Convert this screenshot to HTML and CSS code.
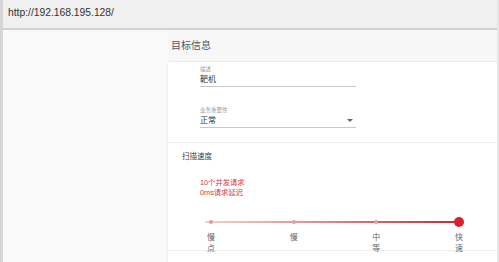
FILE: index.html
```html
<!DOCTYPE html>
<html lang="zh-CN">
<head>
  <meta charset="UTF-8">
  <meta name="viewport" content="width=device-width, initial-scale=1.0">
  <title>目标信息</title>
  <link rel="stylesheet" href="styles.css">
</head>
<body>
  <div class="frame">
    <div class="urlbar">http://192.168.195.128/</div>

    <div class="page">
      <aside class="sidebar"></aside>

      <main class="main">
        <h2 class="title">目标信息</h2>

        <div class="card">
          <!-- Target fields -->
          <section class="fields">
            <div class="field">
              <div class="field-label">描述</div>
              <div class="field-value">靶机</div>
            </div>
            <div class="field field-select">
              <div class="field-label">业务重要性</div>
              <div class="field-value">
                <span>正常</span>
                <svg class="arrow" width="6" height="3" viewBox="0 0 6 3"><polygon points="0,0 6,0 3,3" fill="#666"/></svg>
              </div>
            </div>
          </section>

          <!-- Scan speed -->
          <section class="speed">
            <div class="speed-title">扫描速度</div>
            <div class="speed-info">
              <div>10个并发请求</div>
              <div>0ms请求延迟</div>
            </div>
            <div class="slider">
              <div class="track">
                <span class="dot" style="left: 0%"></span>
                <span class="dot" style="left: 33.33%"></span>
                <span class="dot" style="left: 66.67%"></span>
                <span class="thumb" style="left: 100%"></span>
              </div>
              <div class="marks">
                <span class="mark">慢<br>点</span>
                <span class="mark">慢</span>
                <span class="mark">中<br>等</span>
                <span class="mark">快<br>速</span>
              </div>
            </div>
          </section>

          <section class="next"></section>
        </div>
      </main>
    </div>
  </div>
</body>
</html>
```

FILE: styles.css
```css
/* Page frame as captured from the browser */
html, body {
  margin: 0;
  padding: 0;
  height: 100%;
  overflow: hidden;
}

body {
  font-family: "Liberation Sans", "Noto Sans CJK SC", sans-serif;
  color: #333;
  background: #fafafa;
}

.frame {
  height: 100%;
  box-sizing: border-box;
  border-left: 3px solid #d6d6d6;
  border-right: 2px solid #e6e6e6;
  display: flex;
  flex-direction: column;
}

.urlbar {
  flex: none;
  height: 30px;
  box-sizing: border-box;
  line-height: 26px;
  padding-left: 5px;
  font-size: 10.3px;
  color: #333;
  background: #f0f0f0;
  border-bottom: 2px solid #d2d2d2;
}

.page {
  flex: 1;
  min-height: 0;
  display: flex;
  overflow: hidden;
}

.sidebar {
  width: 165px;
  background: #fafafa;
}

.main {
  flex: 1;
  display: flex;
  flex-direction: column;
  background: #f7f7f7;
}

.title {
  flex: none;
  margin: 0;
  padding-left: 3px;
  height: 32px;
  line-height: 32px;
  font-size: 10px;
  font-weight: normal;
  color: #555;
}

.card {
  flex: 1;
  background: #fff;
  box-shadow: 0 0 2px rgba(0, 0, 0, 0.12);
}

.fields {
  padding: 3px 0 14px 32px;
}

.field {
  width: 156px;
}

.field + .field {
  margin-top: 19px;
}

.field-label {
  font-size: 5.5px;
  line-height: 8px;
  color: #999;
}

.field-value {
  height: 13px;
  line-height: 13px;
  font-size: 8px;
  color: #333;
  border-bottom: 1px solid #c8c8c8;
  display: flex;
  justify-content: space-between;
  align-items: center;
}

.arrow {
  margin-right: 3px;
}

.speed {
  border-top: 1px solid #efefef;
  height: 108px;
  box-sizing: border-box;
  padding: 9px 0 0 14px;
}

.speed-title {
  font-size: 7.5px;
  line-height: 10px;
  color: #444;
}

.speed-info {
  margin: 16px 0 0 18px;
  font-size: 7.3px;
  line-height: 10px;
  color: #d9363e;
}

.slider {
  margin: 19px 0 0 29px;
  width: 248px;
}

.track {
  position: relative;
  height: 10px;
}

.track::before {
  content: "";
  position: absolute;
  left: -6px;
  right: 0;
  top: 4px;
  height: 2px;
  background: linear-gradient(to right, #f4d0d2, #e48a90 45%, #d3242e);
}

.dot {
  position: absolute;
  top: 3px;
  width: 4px;
  height: 4px;
  margin-left: -2px;
  border-radius: 50%;
  background: #e39aa0;
}

.thumb {
  position: absolute;
  top: 0;
  width: 10px;
  height: 10px;
  margin-left: -5px;
  border-radius: 50%;
  background: #d9212d;
}

.marks {
  display: flex;
  justify-content: space-between;
  margin: 5px -6px 0;
}

.mark {
  width: 12px;
  text-align: center;
  font-size: 8px;
  line-height: 11px;
  color: #666;
}

.next {
  border-top: 1px solid #efefef;
}
```
